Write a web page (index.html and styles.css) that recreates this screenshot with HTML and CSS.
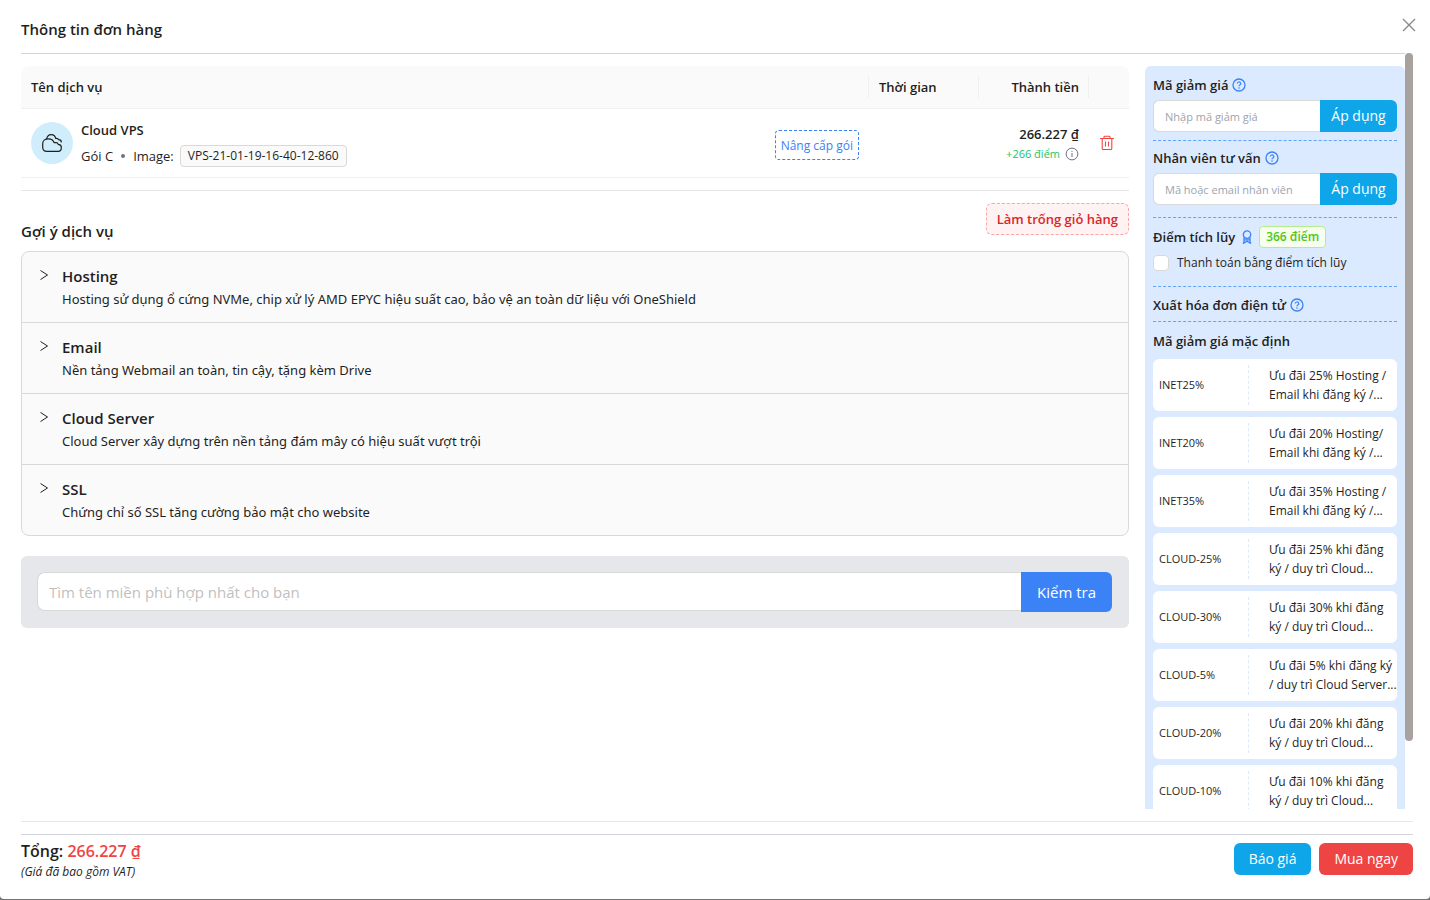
FILE: index.html
```html
<!DOCTYPE html>
<html lang="vi">
<head>
<meta charset="utf-8">
<meta name="viewport" content="width=device-width, initial-scale=1">
<title>Thông tin đơn hàng</title>
<link rel="stylesheet" href="styles.css">
</head>
<body>
<svg class="defs" aria-hidden="true">
  <symbol id="help" viewBox="0 0 14 14"><circle cx="7" cy="7" r="6" fill="none" stroke="currentColor" stroke-width="1.3"/><path d="M5.2 5.5a1.8 1.6 0 1 1 2.6 1.500q-.8.4-.8 1.200" fill="none" stroke="currentColor" stroke-width="1.2"/><circle cx="7" cy="10" r=".8" fill="currentColor"/></symbol>
  <symbol id="chevron" viewBox="0 0 10 12"><path d="M1.500 1.500 8.500 6l-7 4.500" fill="none" stroke="currentColor" stroke-width="1"/></symbol>
</svg>
<main class="modal">
  <header class="modal-header">
    <h1 class="title">Thông tin đơn hàng</h1>
    <button class="close" aria-label="Đóng"><svg width="14" height="14" viewBox="0 0 14 14"><path d="M1 1l12 12M13 1L1 13" stroke="currentColor" stroke-width="1.4" fill="none"/></svg></button>
  </header>
  <div class="scroll-row">
    <div class="content">
      <div class="main-col">
        <table class="cart">
          <colgroup><col><col class="c-time"><col class="c-price"><col class="c-act"></colgroup>
          <thead><tr><th>Tên dịch vụ</th><th>Thời gian</th><th class="right">Thành tiền</th><th aria-label="Xóa"></th></tr></thead>
          <tbody><tr>
            <td><div class="service">
              <span class="avatar"><svg width="20" height="18" viewBox="0 0 20 18" fill="none" stroke="currentColor" stroke-width="1.2" stroke-linejoin="round" stroke-linecap="round"><path d="M5 17.300C2.500 17.300.7 15.500.7 13.200V9.500C.7 6.800 3 4.800 6.200 4.800c3 0 5.200 1.500 5.900 3.900h2c1.200 0 1.900.7 2.100 1.700 1.900.1 3.100 1.100 3.100 2.900v.7c0 1.900-1.300 3.300-3.200 3.300z"/><path d="M4.700 4.900C5.200 2.200 6.900.7 9.200.7c2.300 0 3.900 1.200 4.400 3.600h1c1.100 0 1.700.5 1.900 1.400 1.800.1 2.800.9 2.800 2.300"/></svg></span>
              <div class="service-info">
                <strong class="service-name">Cloud VPS</strong>
                <div class="service-meta"><span>Gói C</span><span class="dot"></span><span>Image:</span><span class="tag">VPS-21-01-19-16-40-12-860</span></div>
              </div>
              <button class="upgrade">Nâng cấp gói</button>
            </div></td>
            <td></td>
            <td class="right"><strong class="price">266.227 ₫</strong><span class="points">+266 điểm <svg width="14" height="14" viewBox="0 0 14 14"><circle cx="7" cy="7" r="5.9" fill="none" stroke="#6b7280"/><path d="M7 6v4M7 4v1" stroke="#6b7280" fill="none"/></svg></span></td>
            <td><button class="trash" aria-label="Xóa dịch vụ"><svg width="14" height="16" viewBox="0 0 14 16" fill="none" stroke="currentColor" stroke-width="1.1"><path d="M0 3.500h14M4 3.500v-1.500q0-.8.800-.8h4.400q.8 0 .8.800v1.500M2.200 3.500v10q0 1 1 1h7.600q1 0 1-1V3.500M5.500 6.500v5M8.500 6.500v5"/></svg></button></td>
          </tr></tbody>
        </table>
        <div class="suggest-head"><h2 class="title">Gợi ý dịch vụ</h2><button class="empty">Làm trống giỏ hàng</button></div>
        <div class="accordion">
          <button class="panel"><svg class="chev"><use href="#chevron"/></svg><span><strong>Hosting</strong>Hosting sử dụng ổ cứng NVMe, chip xử lý AMD EPYC hiệu suất cao, bảo vệ an toàn dữ liệu với OneShield</span></button>
          <button class="panel"><svg class="chev"><use href="#chevron"/></svg><span><strong>Email</strong>Nền tảng Webmail an toàn, tin cậy, tặng kèm Drive</span></button>
          <button class="panel"><svg class="chev"><use href="#chevron"/></svg><span><strong>Cloud Server</strong>Cloud Server xây dựng trên nền tảng đám mây có hiệu suất vượt trội</span></button>
          <button class="panel"><svg class="chev"><use href="#chevron"/></svg><span><strong>SSL</strong>Chứng chỉ số SSL tăng cường bảo mật cho website</span></button>
        </div>
        <form class="domain"><input type="text" aria-label="Tên miền" placeholder="Tìm tên miền phù hợp nhất cho bạn"><button type="button">Kiểm tra</button></form>
      </div>
      <aside class="side">
        <section class="block">
          <label class="label" for="coupon">Mã giảm giá <svg class="help"><use href="#help"/></svg></label>
          <div class="group"><input id="coupon" type="text" placeholder="Nhập mã giảm giá"><button>Áp dụng</button></div>
        </section>
        <section class="block staff">
          <label class="label" for="staff">Nhân viên tư vấn <svg class="help"><use href="#help"/></svg></label>
          <div class="group"><input id="staff" type="text" placeholder="Mã hoặc email nhân viên"><button>Áp dụng</button></div>
        </section>
        <section class="block loyalty">
          <div class="label">Điểm tích lũy <svg class="medal" width="10" height="14" viewBox="0 0 10 14" fill="none" stroke="currentColor" stroke-width="1.3"><circle cx="5" cy="4.6" r="3.7"/><path d="M2 7.500V13L5 11.300 8 13V7.500M.8 13H2M8 13h1.200M2 9.800h6"/></svg><span class="badge">366 điểm</span></div>
          <label class="check"><input type="checkbox">Thanh toán bằng điểm tích lũy</label>
        </section>
        <section class="block invoice"><div class="label">Xuất hóa đơn điện tử <svg class="help"><use href="#help"/></svg></div></section>
        <h3 class="label">Mã giảm giá mặc định</h3>
        <ul class="coupons">
          <li><span class="code">INET25%</span><span class="desc">Ưu đãi 25% Hosting /<br>Email khi đăng ký /...</span></li>
          <li><span class="code">INET20%</span><span class="desc">Ưu đãi 20% Hosting/<br>Email khi đăng ký /...</span></li>
          <li><span class="code">INET35%</span><span class="desc">Ưu đãi 35% Hosting /<br>Email khi đăng ký /...</span></li>
          <li><span class="code">CLOUD-25%</span><span class="desc">Ưu đãi 25% khi đăng<br>ký / duy trì Cloud...</span></li>
          <li><span class="code">CLOUD-30%</span><span class="desc">Ưu đãi 30% khi đăng<br>ký / duy trì Cloud...</span></li>
          <li><span class="code">CLOUD-5%</span><span class="desc">Ưu đãi 5% khi đăng ký<br>/ duy trì Cloud Server...</span></li>
          <li><span class="code">CLOUD-20%</span><span class="desc">Ưu đãi 20% khi đăng<br>ký / duy trì Cloud...</span></li>
          <li><span class="code">CLOUD-10%</span><span class="desc">Ưu đãi 10% khi đăng<br>ký / duy trì Cloud...</span></li>
        </ul>
      </aside>
    </div>
    <div class="scrollbar"><div class="thumb"></div></div>
  </div>
  <footer class="modal-footer">
    <div><div class="total">Tổng: <span>266.227 ₫</span></div><em class="vat">(Giá đã bao gồm VAT)</em></div>
    <div class="actions"><button class="quote">Báo giá</button><button class="buy">Mua ngay</button></div>
  </footer>
</main>
</body>
</html>
```
FILE: styles.css
```css
* { box-sizing: border-box; }
body { margin: 0; background: #737373; color: #1f1f1f; font: 13px/22px "Open Sans", "Noto Sans", sans-serif; }
button, input { font: inherit; color: inherit; }
button { cursor: pointer; border: 0; padding: 0; background: none; white-space: nowrap; }
h1, h2, h3, ul { margin: 0; padding: 0; list-style: none; }
strong, th { font-weight: 600; }
svg { flex: none; }
.defs { display: none; }
.modal { display: flex; flex-direction: column; height: calc(100vh - 1px); padding: 0 17px 0 21px; background: #fff; border-radius: 0 0 4px 4px; }
.modal-header { display: flex; justify-content: space-between; height: 53px; padding-top: 17px; flex: none; }
.title { font-size: 15px; line-height: 24px; font-weight: 600; }
.close { width: 22px; height: 22px; margin: -3px -7px 0 0; color: #8a8a8a; display: grid; place-items: center; }
.scroll-row { display: flex; flex: 1; min-height: 0; }
.content { flex: 1; min-width: 0; display: flex; gap: 16px; align-items: flex-start; border-top: 1px solid #d1d5db; padding-top: 12px; overflow-y: auto; scrollbar-width: none; }
.scrollbar { width: 8px; }
.thumb { height: 91%; border-radius: 4px; background: #a8a29e; }
.main-col { flex: 1; min-width: 0; }

.cart { width: 100%; table-layout: fixed; border-collapse: separate; border-spacing: 0; }
.c-time, .c-price { width: 110px; }
.c-act { width: 40px; }
.cart th { position: relative; height: 43px; padding: 0 10px; text-align: left; background: #fafafa; border-bottom: 1px solid #f0f0f0; }
.cart th:first-child { border-top-left-radius: 8px; }
.cart th:last-child { border-top-right-radius: 8px; }
.cart th:not(:last-child)::after { content: ""; position: absolute; right: 0; top: 10px; height: 22px; width: 1px; background: #f0f0f0; }
.cart td { height: 69px; padding: 0 10px; border-bottom: 1px solid #f0f0f0; }
.cart .right { text-align: right; }
.service { display: flex; align-items: center; }
.avatar { width: 42px; height: 42px; margin-right: 8px; border-radius: 50%; background: #d0edfb; display: grid; place-items: center; }
.service-info { flex: 1; padding-top: 2px; }
.service-name { display: block; line-height: 24px; }
.service-meta { display: flex; align-items: center; height: 28px; }
.dot { width: 4px; height: 4px; margin: 0 8px; border-radius: 50%; background: #6b7280; }
.tag { margin-left: 6px; padding: 0 7px; font-size: 12px; line-height: 20px; border: 1px solid #d9d9d9; border-radius: 4px; background: #fafafa; }
.upgrade { height: 30px; margin-top: 4px; padding: 1px 5px 0; font-size: 12px; color: #3b82f6; border: 1px dashed #3b82f6; border-radius: 4px; }
.price { display: block; padding-top: 2px; line-height: 20px; }
.points { display: flex; justify-content: flex-end; align-items: center; gap: 5px; font-size: 11px; line-height: 20px; color: #22c55e; }
.trash { display: block; margin-left: 1px; color: #ef4444; }
.trash svg, .close svg { display: block; }

.suggest-head { display: flex; justify-content: space-between; height: 61px; margin-top: 12px; padding-top: 12px; border-top: 1px solid #e5e7eb; }
.suggest-head .title { margin-top: 16px; }
.empty { height: 32px; padding: 0 10px; font-weight: 600; color: #dc2626; background: #fef2f2; border: 1px dashed #fca5a5; border-radius: 6px; }
.accordion { border: 1px solid #d9d9d9; border-radius: 8px; overflow: hidden; background: #fafafa; }
.panel { display: flex; gap: 13px; width: 100%; padding: 13px 17px 12px; font-family: "Noto Sans", sans-serif; text-align: left; white-space: normal; }
.panel + .panel { border-top: 1px solid #d9d9d9; }
.panel strong { display: block; margin-bottom: 1px; font: 600 15px/22px "Open Sans", sans-serif; }
.chev { width: 10px; height: 12px; margin-top: 4px; }
.domain { display: flex; margin-top: 20px; padding: 16px 17px 16px 16px; background: #e5e7eb; border-radius: 6px; }
.domain input { flex: 1; min-width: 0; height: 39px; padding: 0 11px; font-size: 15px; background: #fff; border: 1px solid #d9d9d9; border-right: 0; border-radius: 8px 0 0 8px; }
.domain button { height: 40px; padding: 0 16px; font-size: 15px; color: #fff; background: #3b82f6; border-radius: 0 6px 6px 0; }
.domain input::placeholder { color: #bfbfbf; opacity: 1; }

.side { flex: none; width: 260px; padding: 8px 8px 12px; background: #dbeafe; border-radius: 6px; }
.block { border-bottom: 1px dashed #60a5fa; padding-bottom: 8px; margin-bottom: 6px; }
.staff { padding-bottom: 12px; margin-bottom: 8px; }
.label { display: flex; align-items: center; gap: 4px; font-size: 13px; font-weight: 600; line-height: 22px; }
.help { width: 14px; height: 14px; color: #3b82f6; }
.medal { color: #3b82f6; margin: 0 3px; }
.group { display: flex; margin-top: 4px; }
.group input { flex: 1; min-width: 0; height: 32px; padding: 0 11px; font-size: 11px; border: 1px solid #d9d9d9; border-right: 0; border-radius: 6px 0 0 6px; background: #fff; }
.group input::placeholder { color: #9ca3af; opacity: 1; }
.group button { width: 77px; height: 32px; font-size: 14px; color: #fff; background: #0ea5e9; border-radius: 0 6px 6px 0; }
.badge { padding: 0 6px; font-size: 12px; line-height: 20px; color: #52c41a; background: #f6ffed; border: 1px solid #b7eb8f; border-radius: 4px; }
.loyalty { padding-bottom: 12px; margin-bottom: 7px; }
.check { display: flex; align-items: center; gap: 8px; margin-top: 4px; font-size: 12px; }
.check input { appearance: none; width: 16px; height: 16px; margin: 0; background: #fff; border: 1px solid #d9d9d9; border-radius: 4px; }
.invoice { padding-bottom: 5px; margin-bottom: 8px; }
.coupons { display: flex; flex-direction: column; gap: 6px; margin-top: 7px; }
.coupons li { display: flex; align-items: center; height: 52px; padding: 0 6px; background: #fff; border-radius: 6px; }
.code { flex: none; width: 90px; height: 40px; font-size: 11px; line-height: 40px; font-weight: 500; border-right: 1px dashed #dbeafe; }
.desc { padding-left: 20px; font-size: 12px; line-height: 19px; white-space: nowrap; }

.modal-footer { display: flex; justify-content: space-between; flex: none; height: 78px; margin-top: 12px; border-top: 1px solid #e5e7eb; padding-top: 12px; }
.modal-footer > div { flex: 1; border-top: 1px solid #d1d5db; padding-top: 5px; }
.total { font-size: 16px; line-height: 22px; font-weight: 600; }
.total span { color: #ef4444; }
.vat { display: block; font-size: 12px; line-height: 20px; }
.actions { display: flex; justify-content: flex-end; align-items: flex-start; gap: 8px; }
.actions button { height: 32px; margin-top: 3px; padding: 0 15px; font-size: 14px; color: #fff; font-weight: 500; border-radius: 6px; }
.quote { background: #0ea5e9; }
.buy { background: #ef4444; }
```
